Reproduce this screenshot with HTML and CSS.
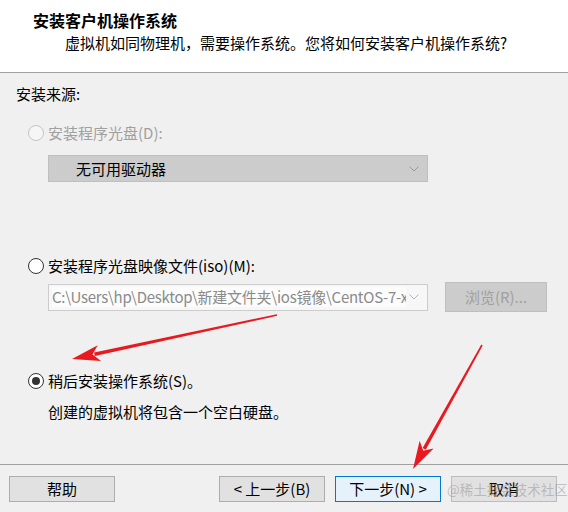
FILE: index.html
```html
<!DOCTYPE html>
<html lang="zh-CN">
<head>
<meta charset="utf-8">
<title>新建虚拟机向导</title>
<link rel="stylesheet" href="styles.css">
</head>
<body>
<div class="dialog">
  <header class="header">
    <div class="title">安装客户机操作系统</div>
    <div class="subtitle">虚拟机如同物理机，需要操作系统。您将如何安装客户机操作系统?</div>
  </header>
  <main class="content">
    <div class="label">安装来源:</div>
    <div class="option disabled opt1"><span class="radio"></span><span>安装程序光盘(D):</span></div>
    <div class="select sel1">
      <span class="select-text">无可用驱动器</span>
      <svg class="chev" width="10" height="6" viewBox="0 0 10 6"><polyline points="0.5,0.5 5,5 9.5,0.5" fill="none" stroke="#9a9a9a" stroke-width="1"/></svg>
    </div>
    <div class="option opt2"><span class="radio"></span><span>安装程序光盘映像文件(iso)(M):</span></div>
    <div class="iso-row">
      <div class="select sel2">
        <span class="select-text iso-text">C:\Users\hp\Desktop\新建文件夹\ios镜像\CentOS-7-x</span>
        <svg class="chev" width="10" height="6" viewBox="0 0 10 6"><polyline points="0.5,0.5 5,5 9.5,0.5" fill="none" stroke="#b4b4b4" stroke-width="1"/></svg>
      </div>
      <button class="btn btn-disabled browse">浏览(R)...</button>
    </div>
    <div class="option opt3"><span class="radio checked"></span><span>稍后安装操作系统(S)。</span></div>
    <div class="note">创建的虚拟机将包含一个空白硬盘。</div>
  </main>
  <footer class="footer">
    <button class="btn">帮助</button>
    <div class="nav">
      <button class="btn">&lt; 上一步(B)</button>
      <button class="btn btn-default">下一步(N) &gt;</button>
      <button class="btn cancel">取消</button>
    </div>
  </footer>
  <div class="watermark">@稀土掘金技术社区</div>
  <svg class="arrows" width="568" height="512" viewBox="0 0 568 512">
    <polygon fill="#e8191f" points="277.17,315.78 276.83,314.22 94.10,352.41 94.86,355.93"/>
    <polygon fill="#e8191f" points="72,359 97.69,345.31 92.53,354.59 101.05,360.95"/>
    <polygon fill="#e8191f" points="482.70,345.39 481.30,344.61 422.61,448.02 425.75,449.78"/>
    <polygon fill="#e8191f" points="413,469 419.63,440.64 423.21,450.65 433.61,448.42"/>
  </svg>
</div>
</body>
</html>
```

FILE: styles.css
```css
html, body {
  margin: 0;
  padding: 0;
}
body {
  background: #f0f0f0;
  font-family: "Noto Sans CJK SC", "Noto Sans", sans-serif;
  font-size: 15px;
  color: #000;
}
.dialog {
  position: relative;
  width: 568px;
  height: 512px;
  overflow: hidden;
}
.header {
  box-sizing: border-box;
  height: 73px;
  background: #fff;
  border-bottom: 1px solid #a0a0a0;
  padding: 10px 0 0 33px;
}
.title {
  font-size: 16px;
  font-weight: bold;
  line-height: 20px;
}
.subtitle {
  margin-top: 3px;
  padding-left: 32px;
  line-height: 20px;
}
.content {
  box-sizing: border-box;
  height: 391px;
  padding: 11px 0 0 16px;
}
.label {
  line-height: 20px;
}
.option {
  display: flex;
  align-items: center;
  line-height: 20px;
  padding-left: 12px;
}
.radio {
  box-sizing: border-box;
  width: 16px;
  height: 16px;
  border-radius: 50%;
  border: 1.5px solid #333;
  background: #fff;
  margin-right: 4px;
  position: relative;
  flex: none;
}
.radio.checked::after {
  content: "";
  position: absolute;
  left: 2.5px;
  top: 2.5px;
  width: 8px;
  height: 8px;
  border-radius: 50%;
  background: #333;
}
.disabled {
  color: #a0a0a0;
}
.disabled .radio {
  border: 1px solid #c4c4c4;
  background: #f6f6f6;
}
.opt1 {
  margin-top: 19px;
}
.select {
  box-sizing: border-box;
  margin-left: 32px;
  width: 380px;
  height: 27px;
  border: 1px solid #bfbfbf;
  display: flex;
  align-items: center;
  line-height: 20px;
}
.select-text {
  white-space: nowrap;
  overflow: hidden;
}
.chev {
  margin-left: auto;
  margin-right: 8px;
  flex: none;
}
.sel1 {
  margin-top: 12px;
  background: #cccccc;
  padding-left: 27px;
}
.opt2 {
  margin-top: 74px;
}
.iso-row {
  margin-top: 6px;
  display: flex;
  align-items: center;
  height: 30px;
}
.sel2 {
  background: #f7f7f7;
  border-color: #cccccc;
  padding-left: 3px;
  color: #8a8a8a;
}
.iso-text {
  width: 354px;
  background: #fcfcfc;
  letter-spacing: -0.25px;
}
.btn {
  box-sizing: border-box;
  width: 106px;
  height: 26px;
  padding: 0;
  border: 1px solid #adadad;
  background: #e1e1e1;
  font-family: "Noto Sans CJK SC", "Noto Sans", sans-serif;
  font-size: 15px;
  line-height: 20px;
  color: #000;
}
.btn-disabled {
  background: #cccccc;
  border-color: #bfbfbf;
  color: #a0a0a0;
}
.browse {
  margin-left: 17px;
  width: 102px;
  height: 30px;
}
.opt3 {
  margin-top: 59px;
}
.note {
  margin-top: 11px;
  padding-left: 32px;
  line-height: 20px;
}
.footer {
  box-sizing: border-box;
  height: 48px;
  border-top: 1px solid #a0a0a0;
  padding: 11px 11px 0 9px;
  display: flex;
  align-items: flex-start;
}
.nav {
  margin-left: auto;
  display: flex;
  gap: 10px;
}
.btn-default {
  border-color: #0078d7;
  background: #e5f1fb;
}
.cancel {
  border-color: #bcbcbc;
}
.watermark {
  position: absolute;
  left: 447px;
  top: 480px;
  font-size: 13.5px;
  line-height: 18px;
  color: rgba(150, 150, 150, 0.55);
  white-space: nowrap;
  pointer-events: none;
}
.arrows {
  position: absolute;
  left: 0;
  top: 0;
  pointer-events: none;
}
```
